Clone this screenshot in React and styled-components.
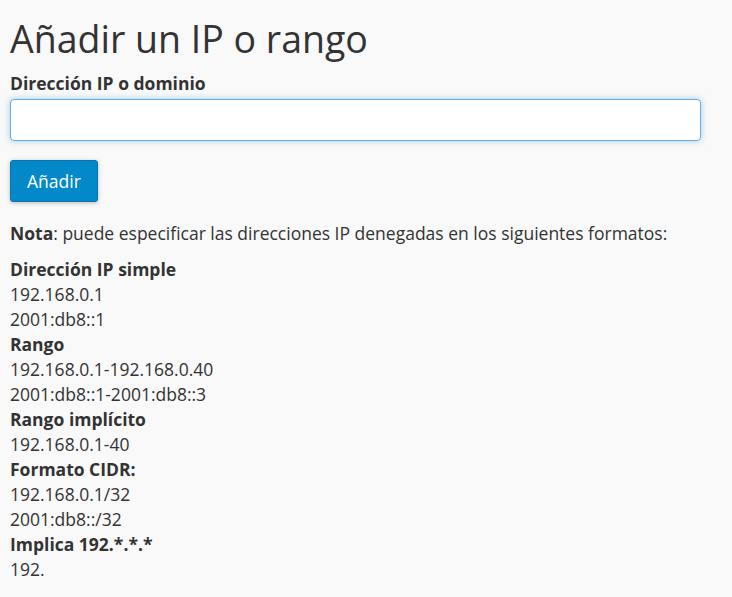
import React from "react";
import styled, { createGlobalStyle } from "styled-components";

const GlobalStyle = createGlobalStyle`
  html, body {
    margin: 0;
    padding: 0;
    background: #f9f9f9;
  }
  body {
    font-family: "Open Sans", "Liberation Sans", sans-serif;
    color: #333;
  }
`;

const Page = styled.div`
  padding: 0 10px;
  font-size: 17.5px;
  line-height: 25px;
`;

const Title = styled.h1`
  font-size: 37.5px;
  font-weight: 400;
  line-height: 42px;
  margin: 18px 0 11px;
`;

const Label = styled.label`
  display: block;
  font-weight: 700;
  margin-bottom: 3px;
`;

const Input = styled.input`
  display: block;
  box-sizing: border-box;
  width: 691px;
  height: 42px;
  border: 1px solid #66afe9;
  border-radius: 4px;
  background: #fff;
  box-shadow: 0 0 6px rgba(102, 175, 233, 0.6);
  outline: none;
  font: inherit;
  padding: 6px 12px;
`;

const Button = styled.button`
  margin-top: 19px;
  height: 42px;
  padding: 0 16px;
  background: #0389c9;
  color: #fff;
  border: 1px solid #0377ad;
  border-radius: 3px;
  font: inherit;
  box-shadow: 0 1px 4px rgba(0, 0, 0, 0.25);
`;

const Note = styled.p`
  margin: 19px 0 11px;
`;

const List = styled.div``;

const Heading = styled.div`
  font-weight: 700;
`;

const Line = styled.div``;

const formats = [
  { title: "Dirección IP simple", items: ["192.168.0.1", "2001:db8::1"] },
  { title: "Rango", items: ["192.168.0.1-192.168.0.40", "2001:db8::1-2001:db8::3"] },
  { title: "Rango implícito", items: ["192.168.0.1-40"] },
  { title: "Formato CIDR:", items: ["192.168.0.1/32", "2001:db8::/32"] },
  { title: "Implica 192.*.*.*", items: ["192."] },
];

export default function App() {
  return (
    <>
      <GlobalStyle />
      <Page>
        <Title>Añadir un IP o rango</Title>
        <Label htmlFor="ip">Dirección IP o dominio</Label>
        <Input id="ip" type="text" />
        <Button>Añadir</Button>
        <Note>
          <b>Nota</b>: puede especificar las direcciones IP denegadas en los siguientes formatos:
        </Note>
        <List>
          {formats.map((f) => (
            <React.Fragment key={f.title}>
              <Heading>{f.title}</Heading>
              {f.items.map((it) => (
                <Line key={it}>{it}</Line>
              ))}
            </React.Fragment>
          ))}
        </List>
      </Page>
    </>
  );
}
